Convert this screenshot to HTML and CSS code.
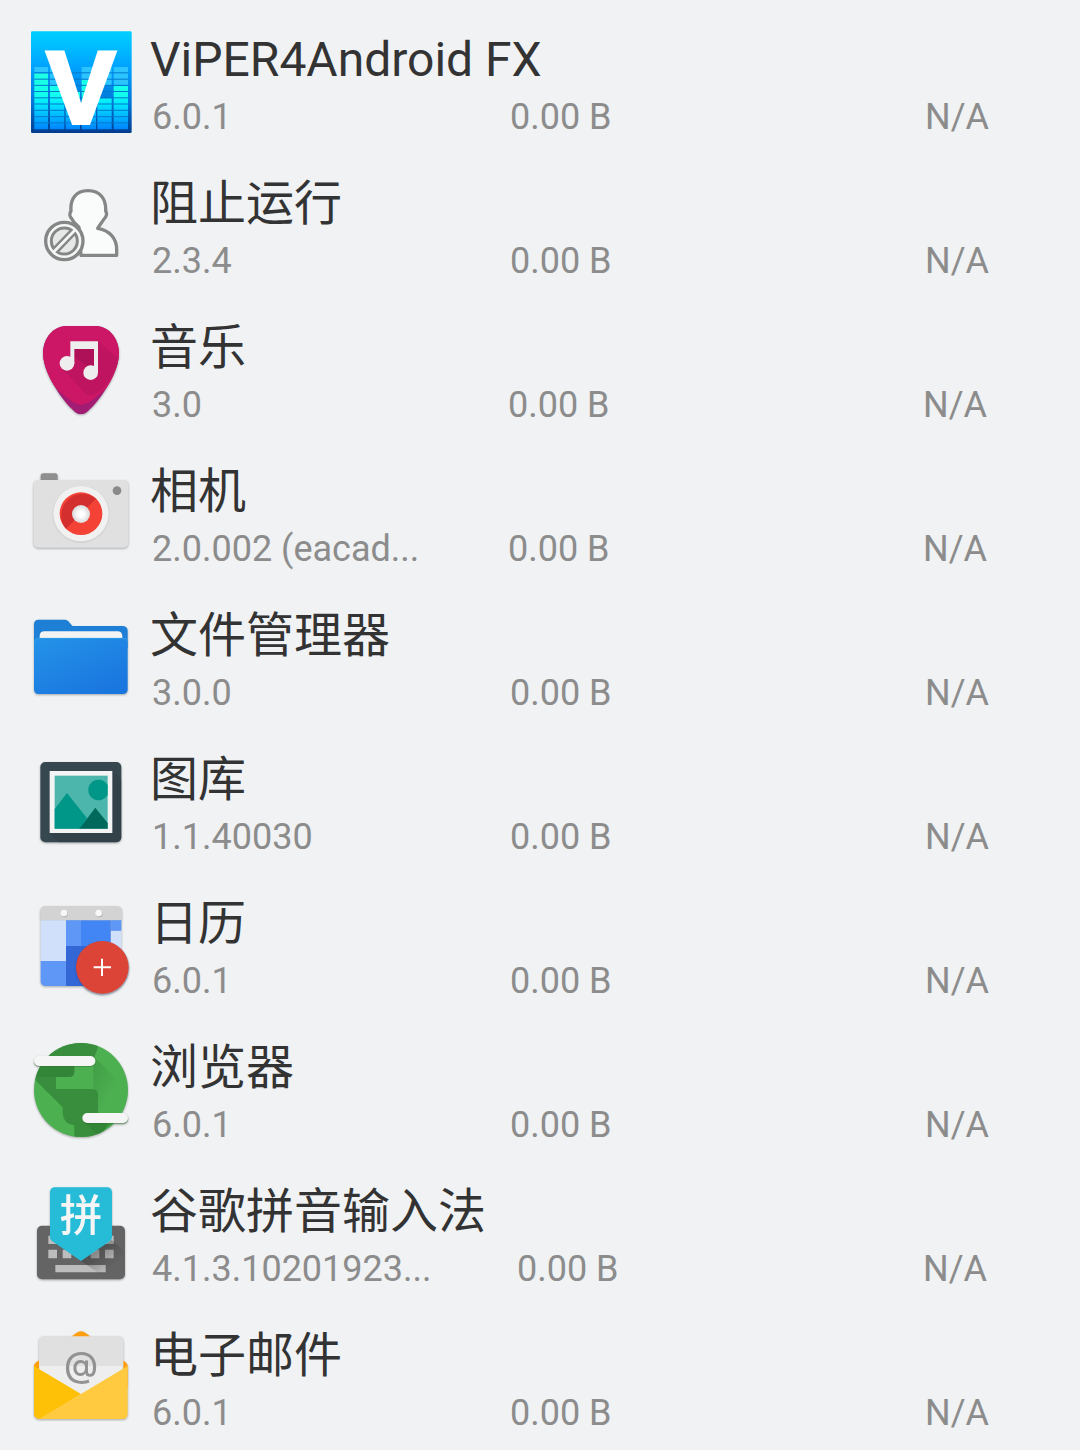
FILE: index.html
```html
<!DOCTYPE html>
<html lang="zh-CN">
<head>
    <meta charset="UTF-8">
    <meta name="viewport" content="width=device-width, initial-scale=1">
    <title>应用列表</title>
    <link rel="stylesheet" href="styles.css">
</head>
<body>
    <ul class="app-list">
        <li class="app">
            <svg class="app-icon" viewBox="30 30 306 312" aria-hidden="true">
                <defs>
                    <linearGradient id="viper-bg" x1="0" y1="0" x2="0" y2="1">
                        <stop offset="0" stop-color="#00d0ff"/>
                        <stop offset="0.35" stop-color="#00a2ff"/>
                        <stop offset="0.7" stop-color="#0076d8"/>
                        <stop offset="1" stop-color="#003c8c"/>
                    </linearGradient>
                    <linearGradient id="viper-bars" gradientUnits="userSpaceOnUse" x1="0" y1="141" x2="0" y2="328">
                        <stop offset="0" stop-color="#22ffe0"/>
                        <stop offset="0.45" stop-color="#12ffee"/>
                        <stop offset="0.6" stop-color="#00e4ff"/>
                        <stop offset="1" stop-color="#0084ff"/>
                    </linearGradient>
                </defs>
                <rect x="33" y="34" width="302" height="305" rx="4" fill="url(#viper-bg)"/>
                <path fill="#2cc4ff" d="M43 141h41v16H43zM90 141h43v54H90zM185 141h43v38h-43zM232 141h43v54h-43zM281 141h43v54h-43z"/>
                <path fill="url(#viper-bars)" d="M43 160h41v168H43zM90 197h43v131H90zM137 216h43v112h-43zM185 179h43v149h-43zM232 235h43v93h-43zM281 197h43v131h-43z"/>
                <path stroke="#0078cc" stroke-width="3" d="M43 158.500h281M43 177.500h281M43 196h281M43 214.500h281M43 233.500h281M43 252h281M43 271h281M43 290h281M43 308.500h281"/>
                <text class="viper-letter" x="183" y="308">V</text>
            </svg>
            <div class="app-info">
                <h2 class="app-name">ViPER4Android FX</h2>
                <div class="app-meta"><span class="version">6.0.1</span><span>0.00 B</span><span>N/A</span></div>
            </div>
        </li>

        <li class="app">
            <svg class="app-icon" viewBox="30 12 306 312" aria-hidden="true">
                <path fill="#fafcfc" stroke="#858786" stroke-width="10" stroke-linejoin="round" d="M183 256H290V238C290 204 268 181 233 175C242 161 248 154 252 147C259 142 262 130 257 123C259 86 240 62 204 62C168 62 150 86 153 123C147 132 150 142 156 147C160 157 168 163 177 172Z"/>
                <circle cx="133" cy="213" r="56" fill="#f5f7f7" stroke="#858786" stroke-width="10"/>
                <circle cx="133" cy="213" r="39" fill="#e6e8e8" stroke="#858786" stroke-width="9"/>
                <path stroke="#858786" stroke-width="23" d="M106 241L160 185"/>
                <path stroke="#f5f7f7" stroke-width="8" d="M101 246L165 180"/>
            </svg>
            <div class="app-info">
                <h2 class="app-name">阻止运行</h2>
                <div class="app-meta"><span class="version">2.3.4</span><span>0.00 B</span><span>N/A</span></div>
            </div>
        </li>

        <li class="app">
            <svg class="app-icon shadow" viewBox="30 24 306 312" aria-hidden="true">
                <defs>
                    <clipPath id="pick"><path d="M135 48H231C272 53 297 89 297 132C295 200 224 290 198 308Q183 317 168 308C142 290 71 200 69 132C69 89 94 53 135 48Z"/></clipPath>
                </defs>
                <g clip-path="url(#pick)">
                    <path fill="#a31c73" d="M60 40H310V320H60Z"/>
                    <path fill="#cb1765" d="M60 40H310V170C275 225 215 282 183 285C151 282 91 225 60 170Z"/>
                    <path fill="#b8145f" opacity="0.6" d="M234 94L297 148C280 210 225 275 196 250L127 177L155 170L163 117H222Z"/>
                    <path fill="#a50f54" opacity="0.6" d="M163 117H222V166L200 168L163 140Z"/>
                </g>
                <path fill="#eee" d="M151 94H234V188H222V117H163V160H151Z"/>
                <circle cx="141" cy="160" r="22" fill="#eee"/>
                <circle cx="212" cy="188" r="22" fill="#eee"/>
            </svg>
            <div class="app-info">
                <h2 class="app-name">音乐</h2>
                <div class="app-meta short"><span class="version">3.0</span><span>0.00 B</span><span>N/A</span></div>
            </div>
        </li>

        <li class="app">
            <svg class="app-icon shadow" viewBox="30 6 306 312" aria-hidden="true">
                <defs>
                    <radialGradient id="lens">
                        <stop offset="0.3" stop-color="#fff"/>
                        <stop offset="1" stop-color="#dadada"/>
                    </radialGradient>
                </defs>
                <rect x="62" y="40" width="51" height="30" rx="8" fill="#8f8f8f"/>
                <rect x="41" y="60" width="284" height="203" rx="14" fill="#e0e0e0"/>
                <circle cx="183" cy="163" r="86" fill="#d3d3d3"/>
                <circle cx="183" cy="161" r="83" fill="#f1f1f1"/>
                <circle cx="183" cy="161" r="64" fill="#f44336"/>
                <path fill="#d32f2f" d="M138 206A64 64 0 0 1 228 116Z"/>
                <circle cx="183" cy="162" r="27" fill="url(#lens)"/>
                <circle cx="291" cy="92" r="13" fill="#8a8a8a"/>
            </svg>
            <div class="app-info">
                <h2 class="app-name">相机</h2>
                <div class="app-meta short"><span class="version">2.0.002 (eacad...</span><span>0.00 B</span><span>N/A</span></div>
            </div>
        </li>

        <li class="app">
            <svg class="app-icon shadow" viewBox="30 3 306 312" aria-hidden="true">
                <defs>
                    <linearGradient id="folder" x1="0" y1="0" x2="0.7" y2="1">
                        <stop offset="0" stop-color="#2493e8"/>
                        <stop offset="1" stop-color="#1a76df"/>
                    </linearGradient>
                </defs>
                <path fill="#1e7fd6" d="M56 44H136Q141 44 145 49L157 63H309Q323 64 323 78V130H42V58Q42 44 56 44Z"/>
                <path fill="#f3f3f3" d="M59 110V92Q60 79 73 79H293Q305 79 307 92V110Z"/>
                <path fill="url(#folder)" d="M42 110Q43 99 56 99H309Q322 99 323 110V253Q323 267 309 267H56Q42 267 42 253Z"/>
                <path fill="none" stroke="#36a3dc" stroke-width="2" d="M43 109Q45 100 56 100H309Q320 100 322 109"/>
            </svg>
            <div class="app-info">
                <h2 class="app-name">文件管理器</h2>
                <div class="app-meta"><span class="version">3.0.0</span><span>0.00 B</span><span>N/A</span></div>
            </div>
        </li>

        <li class="app">
            <svg class="app-icon shadow" viewBox="30 0 306 312" aria-hidden="true">
                <rect x="61" y="36" width="243" height="241" rx="15" fill="#37474f"/>
                <path fill="#2c3a41" opacity="0.4" d="M277 63L304 90V262Q304 277 289 277H117L89 249H277Z"/>
                <rect x="89" y="63" width="188" height="186" fill="#f4f4f4"/>
                <rect x="104" y="77" width="159" height="159" fill="#4db6ac"/>
                <path fill="#009688" d="M263 105V135A31 31 0 1 1 263 105ZM104 177L141 129L201 205L180 236H104Z"/>
                <path fill="#00695c" d="M178 236L226 173L263 219V236Z"/>
            </svg>
            <div class="app-info">
                <h2 class="app-name">图库</h2>
                <div class="app-meta"><span class="version">1.1.40030</span><span>0.00 B</span><span>N/A</span></div>
            </div>
        </li>

        <li class="app">
            <svg class="app-icon shadow" viewBox="30 -3 306 312" aria-hidden="true">
                <path fill="#d3d3d3" d="M61 76V48Q62 33 77 33H290Q305 33 306 48V76Z"/>
                <path fill="#d0e0fa" d="M62 76H138V198H62ZM272 107H304V170H272Z"/>
                <path fill="#5e97f6" d="M138 76H183V153H138ZM272 76H304V107H272ZM62 198H138V273H76Q62 272 62 259Z"/>
                <path fill="#4285f4" d="M183 76H272V153H183Z"/>
                <path fill="#3367d6" d="M138 153H272V273H138Z"/>
                <circle cx="134" cy="57" r="10" fill="#b5b5b5"/>
                <circle cx="238" cy="57" r="10" fill="#b5b5b5"/>
                <circle cx="132" cy="54" r="10" fill="#f7f7f7"/>
                <circle cx="236" cy="54" r="10" fill="#f7f7f7"/>
                <circle cx="247" cy="220" r="82" fill="#203c78" opacity="0.2"/>
                <circle cx="247" cy="217" r="79" fill="#db4437"/>
                <path fill="none" stroke="#fff" stroke-width="6" d="M221 217H273M246 191V243"/>
            </svg>
            <div class="app-info">
                <h2 class="app-name">日历</h2>
                <div class="app-meta"><span class="version">6.0.1</span><span>0.00 B</span><span>N/A</span></div>
            </div>
        </li>

        <li class="app">
            <svg class="app-icon shadow" viewBox="30 9 306 312" aria-hidden="true">
                <defs>
                    <clipPath id="globe"><circle cx="183" cy="165" r="141"/></clipPath>
                    <linearGradient id="globe-shade" x1="0" y1="0" x2="1" y2="1">
                        <stop offset="0" stop-color="#388e3c" stop-opacity="0.6"/>
                        <stop offset="0.6" stop-color="#388e3c" stop-opacity="0"/>
                    </linearGradient>
                </defs>
                <g clip-path="url(#globe)">
                    <path fill="#4caf50" d="M40 20H330V310H40Z"/>
                    <path fill="url(#globe-shade)" d="M224 68L310 150V240H220V92Z"/>
                    <path fill="#388e3c" d="M40 20H236Q234 45 224 63L218 92H163V110Q162 126 146 126H108V162H216Q234 163 234 180V235L264 264L240 310H163V271Q130 268 128 235V217L40 129Z"/>
                    <path fill="#2e7d32" opacity="0.5" d="M50 92H163V110Q162 126 146 126H40ZM190 258L232 300L280 264Z"/>
                </g>
                <path stroke="#2c6e30" stroke-opacity="0.4" stroke-width="30" stroke-linecap="round" d="M57 81H211M202 253H310"/>
                <path stroke="#f5f5f5" stroke-width="30" stroke-linecap="round" d="M57 78H211M202 249H309"/>
            </svg>
            <div class="app-info">
                <h2 class="app-name">浏览器</h2>
                <div class="app-meta"><span class="version">6.0.1</span><span>0.00 B</span><span>N/A</span></div>
            </div>
        </li>

        <li class="app">
            <svg class="app-icon shadow" viewBox="30 6 306 312" aria-hidden="true">
                <defs>
                    <linearGradient id="key-shade" x1="0" y1="0" x2="1" y2="1">
                        <stop offset="0.3" stop-color="#303030" stop-opacity="0.4"/>
                        <stop offset="0.7" stop-color="#303030" stop-opacity="0"/>
                    </linearGradient>
                </defs>
                <rect x="51" y="137" width="264" height="161" rx="15" fill="#646464"/>
                <path fill="#bdbdbd" d="M85 167H111V192H85ZM255 167H281V192H255ZM85 209H111V235H85ZM128 209H154V235H128ZM212 209H238V235H212ZM255 209H281V235H255ZM106 255H257V277H106Z"/>
                <path fill="url(#key-shade)" d="M183 243L275 180L315 215V283Q313 298 299 298H265Z"/>
                <path fill="#26bcd7" d="M90 36Q91 22 105 22H261Q275 22 276 36V172Q276 178 270 183L183 243L96 183Q90 178 90 172Z"/>
                <text class="pinyin-letter" x="183" y="153">拼</text>
            </svg>
            <div class="app-info">
                <h2 class="app-name">谷歌拼音输入法</h2>
                <div class="app-meta long"><span class="version">4.1.3.10201923...</span><span>0.00 B</span><span>N/A</span></div>
            </div>
        </li>

        <li class="app">
            <svg class="app-icon shadow" viewBox="30 18 306 312" aria-hidden="true">
                <path fill="#ff9f0f" d="M42 137Q43 128 60 119L168 40Q183 27 198 40L306 119Q322 128 323 137V200H42Z"/>
                <path fill="#e0e0e0" d="M57 63Q58 49 72 49H296Q309 49 310 63V250H57Z"/>
                <path fill="#eee" d="M59 138H306V180L183 230L59 180Z"/>
                <text class="mail-sign" x="183" y="170">@</text>
                <path fill="#ffc107" d="M42 138L183 222L62 297Q42 297 42 282Z"/>
                <path fill="#ffca3f" d="M323 138V282Q322 297 308 297H57L183 222Z"/>
            </svg>
            <div class="app-info">
                <h2 class="app-name">电子邮件</h2>
                <div class="app-meta"><span class="version">6.0.1</span><span>0.00 B</span><span>N/A</span></div>
            </div>
        </li>
    </ul>
</body>
</html>
```
FILE: styles.css
```css
body {
    margin: 0;
    background-color: #f0f2f4;
    font-family: Roboto, "Noto Sans CJK SC", sans-serif;
}
.app-list {
    list-style: none;
    margin: 0;
    padding: 0;
}
.app {
    display: flex;
    align-items: flex-start;
    gap: 18px;
    min-height: 144px;
    padding: 30px 0 0 30px;
    box-sizing: border-box;
}
.app-icon {
    flex: none;
    width: 102px;
    height: 104px;
    overflow: visible;
}
.shadow {
    filter: drop-shadow(0 1px 1px rgba(0,0,0,0.3));
}
.app-info {
    flex: 1;
    min-width: 0;
    padding-top: 2px;
}
.app-name {
    margin: 0 0 7px;
    font-size: 48px;
    line-height: 56px;
    font-weight: 400;
    color: #333;
}
.app-meta {
    display: grid;
    grid-template-columns: minmax(0, 358fr) minmax(0, 415fr) minmax(0, 155fr);
    padding-left: 2px;
    font-size: 36px;
    line-height: 44px;
    color: #8c8c8c;
    white-space: nowrap;
}
.app-meta.short {
    grid-template-columns: minmax(0, 356fr) minmax(0, 415fr) minmax(0, 157fr);
}
.app-meta.long {
    grid-template-columns: minmax(0, 365fr) minmax(0, 406fr) minmax(0, 157fr);
}
.version {
    overflow: hidden;
    text-overflow: ellipsis;
}
.viper-letter {
    font-family: "Liberation Sans", sans-serif;
    font-size: 308px;
    font-weight: 700;
    text-anchor: middle;
    fill: #fff;
    stroke: #fff;
    stroke-width: 12px;
}
.pinyin-letter {
    font-family: "Noto Sans CJK SC", sans-serif;
    font-size: 128px;
    font-weight: 500;
    text-anchor: middle;
    fill: #f5f5f5;
}
.mail-sign {
    font-family: Inter, sans-serif;
    font-size: 104px;
    font-weight: 500;
    text-anchor: middle;
    fill: #929292;
}
```
